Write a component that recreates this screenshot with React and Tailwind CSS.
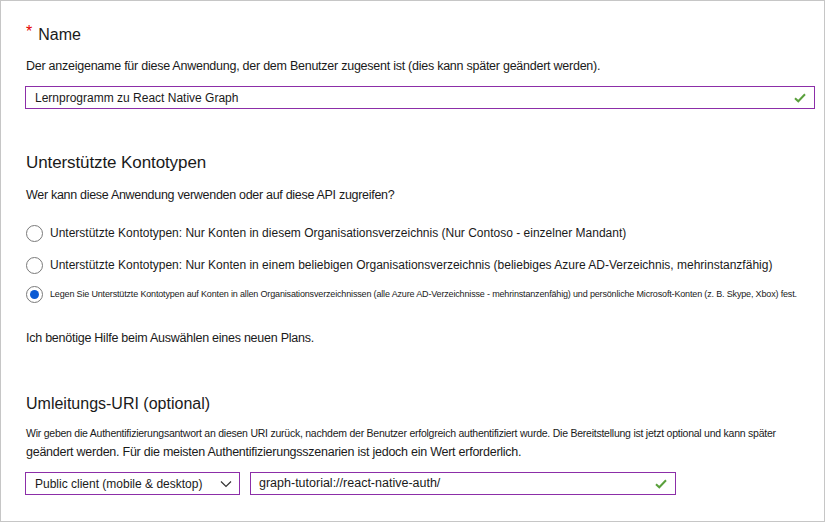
import React from "react";

const Check = () => (
  <svg width="12" height="10" viewBox="0 0 12 10" className="shrink-0">
    <path d="M1 5.2 L4.3 8.3 L11 1.3" fill="none" stroke="#5aa03c" strokeWidth="2" />
  </svg>
);

const Radio = ({ checked }) => (
  <span className="w-[17px] h-[17px] rounded-full border border-[#7a7a7a] bg-white flex items-center justify-center shrink-0">
    {checked && <span className="w-[9px] h-[9px] rounded-full bg-[#0a5ad4]" />}
  </span>
);

export default function App() {
  return (
    <div
      className="w-[825px] h-[522px] border border-[#c6c6c6] bg-white text-[#1a1a1a] pl-[24px] pr-[9px] pt-[22px] overflow-hidden"
      style={{ fontFamily: '"Liberation Sans", Arial, sans-serif' }}
    >
      <div className="h-[24px] flex items-center text-[16px] leading-[24px]">
        <span className="text-[#e50000] text-[16px] mr-[6px] -mt-[6px] ml-[1px]">*</span>
        <span>Name</span>
      </div>
      <div className="mt-[10px] h-[18px] leading-[18px] text-[12.5px] ml-[1px] tracking-[-0.25px]">
        Der anzeigename für diese Anwendung, der dem Benutzer zugesent ist (dies kann später geändert werden).
      </div>
      <div className="mt-[11px] h-[23px] w-[790px] border border-[#8c2ea8] flex items-center justify-between pl-[9px] pr-[8px] text-[12px]">
        <span>Lernprogramm zu React Native Graph</span>
        <Check />
      </div>

      <div className="mt-[42px] h-[24px] leading-[24px] text-[17px] ml-[1px] tracking-[-0.1px]">Unterstützte Kontotypen</div>
      <div className="mt-[11px] h-[18px] leading-[18px] text-[12.5px] ml-[1px] tracking-[-0.3px]">
        Wer kann diese Anwendung verwenden oder auf diese API zugreifen?
      </div>

      <div className="mt-[20px] h-[18px] flex items-center gap-[7px] ml-[1px]">
        <Radio />
        <span className="text-[12px] leading-[18px] whitespace-nowrap">
          Unterstützte Kontotypen: Nur Konten in diesem Organisationsverzeichnis (Nur Contoso - einzelner Mandant)
        </span>
      </div>
      <div className="mt-[14px] h-[18px] flex items-center gap-[7px] ml-[1px]">
        <Radio />
        <span className="text-[12px] leading-[18px] whitespace-nowrap">
          Unterstützte Kontotypen: Nur Konten in einem beliebigen Organisationsverzeichnis (beliebiges Azure AD-Verzeichnis, mehrinstanzfähig)
        </span>
      </div>
      <div className="mt-[11px] h-[18px] flex items-center gap-[7px] ml-[1px]">
        <Radio checked />
        <span className="text-[9px] leading-[18px] tracking-[-0.16px] whitespace-nowrap">
          Legen Sie Unterstützte Kontotypen auf Konten in allen Organisationsverzeichnissen (alle Azure AD-Verzeichnisse - mehrinstanzenfähig) und persönliche Microsoft-Konten (z. B. Skype, Xbox) fest.
        </span>
      </div>

      <div className="mt-[26px] h-[18px] leading-[18px] text-[12.5px] ml-[1px] tracking-[-0.25px]">
        Ich benötige Hilfe beim Auswählen eines neuen Plans.
      </div>

      <div className="mt-[45px] h-[24px] leading-[24px] text-[16px] ml-[1px]">Umleitungs-URI (optional)</div>
      <div className="mt-[8px] h-[19px] leading-[19px] text-[10.5px] ml-[1px] tracking-[-0.24px] whitespace-nowrap">
        Wir geben die Authentifizierungsantwort an diesen URI zurück, nachdem der Benutzer erfolgreich authentifiziert wurde. Die Bereitstellung ist jetzt optional und kann später
      </div>
      <div className="h-[19px] leading-[19px] text-[12.5px] ml-[1px] tracking-[-0.25px]">
        geändert werden. Für die meisten Authentifizierungsszenarien ist jedoch ein Wert erforderlich.
      </div>

      <div className="mt-[10px] flex gap-[10px]">
        <div className="h-[23px] w-[215px] border border-[#8c2ea8] flex items-center justify-between pl-[9px] pr-[7px] text-[12px]">
          <span>Public client (mobile &amp; desktop)</span>
          <svg width="12" height="8" viewBox="0 0 12 8">
            <path d="M1 1.5 L6 6.5 L11 1.5" fill="none" stroke="#333" strokeWidth="1.2" />
          </svg>
        </div>
        <div className="h-[23px] w-[426px] border border-[#8c2ea8] flex items-center justify-between pl-[8px] pr-[8px] text-[12.5px]">
          <span>graph-tutorial://react-native-auth/</span>
          <Check />
        </div>
      </div>
    </div>
  );
}
